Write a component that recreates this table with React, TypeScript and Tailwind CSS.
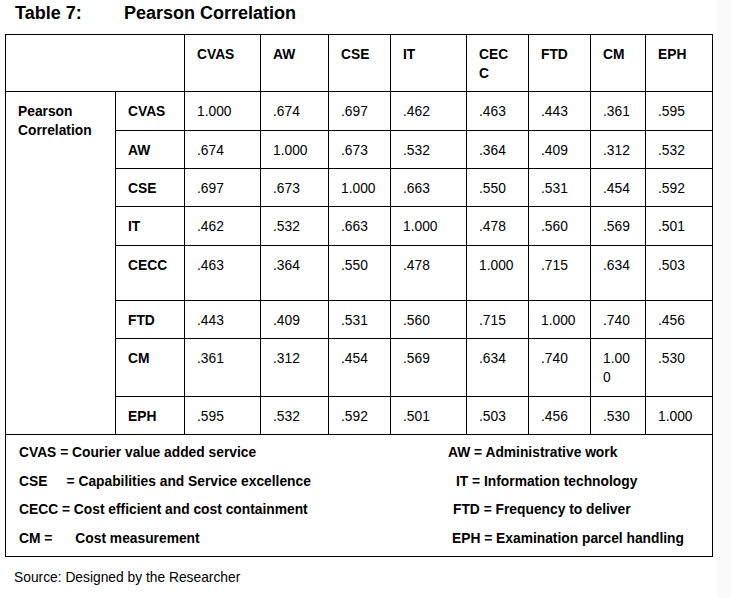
import React from "react";

const cols = ["CVAS", "AW", "CSE", "IT", "CECC", "FTD", "CM", "EPH"];
const data: string[][] = [
  ["1.000", ".674", ".697", ".462", ".463", ".443", ".361", ".595"],
  [".674", "1.000", ".673", ".532", ".364", ".409", ".312", ".532"],
  [".697", ".673", "1.000", ".663", ".550", ".531", ".454", ".592"],
  [".462", ".532", ".663", "1.000", ".478", ".560", ".569", ".501"],
  [".463", ".364", ".550", ".478", "1.000", ".715", ".634", ".503"],
  [".443", ".409", ".531", ".560", ".715", "1.000", ".740", ".456"],
  [".361", ".312", ".454", ".569", ".634", ".740", "1.00\n0", ".530"],
  [".595", ".532", ".592", ".501", ".503", ".456", ".530", "1.000"],
];

function T({ children, bold }: { children: React.ReactNode; bold?: boolean }) {
  return (
    <span
      className={
        "inline-block origin-left scale-x-[0.92] whitespace-pre text-black " +
        (bold ? "font-bold" : "font-normal")
      }
    >
      {children}
    </span>
  );
}

function Cell({ children, bold, className }: { children: React.ReactNode; bold?: boolean; className?: string }) {
  return (
    <div className={"bg-white pl-[12px] pt-[9px] text-[15px] leading-[19px] " + (className ?? "")}>
      <T bold={bold}>{children}</T>
    </div>
  );
}

export default function App() {
  return (
    <div className="flex w-[731px] h-[598px] bg-white font-['Liberation_Sans',Arial,sans-serif]">
      <div className="w-[718px] shrink-0 bg-white">
        <div className="flex h-[34px] pt-[2px] pl-[15px] text-[18px] leading-[22px] font-bold text-black">
          <span className="w-[109px] shrink-0">Table 7:</span>
          <span>Pearson Correlation</span>
        </div>
        <div className="ml-[5px] grid w-[708px] grid-cols-[109px_68px_75px_67px_61px_75px_61px_61px_54px_66px] grid-rows-[56px_38px_37px_37px_38px_54px_37px_57px_37px_121px] gap-px bg-black p-px">
          <div className="col-span-2 bg-white" />
          {cols.map((c) => (
            <Cell key={c} bold>
              {c === "CECC" ? "CEC\nC" : c}
            </Cell>
          ))}
          <Cell bold className="row-span-8">
            {"Pearson\nCorrelation"}
          </Cell>
          {data.map((row, i) => (
            <React.Fragment key={cols[i]}>
              <Cell bold>{cols[i]}</Cell>
              {row.map((v, j) => (
                <Cell key={j}>{v}</Cell>
              ))}
            </React.Fragment>
          ))}
          <div className="col-span-10 bg-white pl-[13px] pt-[3px] text-[15px] leading-[28.7px] font-bold">
            <div className="grid grid-cols-[429px_1fr]">
              <T bold>CVAS = Courier value added service</T>
              <T bold>AW = Administrative work</T>
              <T bold>{"CSE     = Capabilities and Service excellence"}</T>
              <span className="pl-[8px]">
                <T bold>IT = Information technology</T>
              </span>
              <T bold>CECC = Cost efficient and cost containment</T>
              <span className="pl-[5px]">
                <T bold>FTD = Frequency to deliver</T>
              </span>
              <T bold>{"CM =      Cost measurement"}</T>
              <span className="pl-[4px]">
                <T bold>EPH = Examination parcel handling</T>
              </span>
            </div>
          </div>
        </div>
        <div className="mt-[10px] pl-[14px] text-[15px] leading-[19px]">
          <T>Source: Designed by the Researcher</T>
        </div>
      </div>
      <div className="flex-1 bg-[#fbfbfb]" />
    </div>
  );
}
